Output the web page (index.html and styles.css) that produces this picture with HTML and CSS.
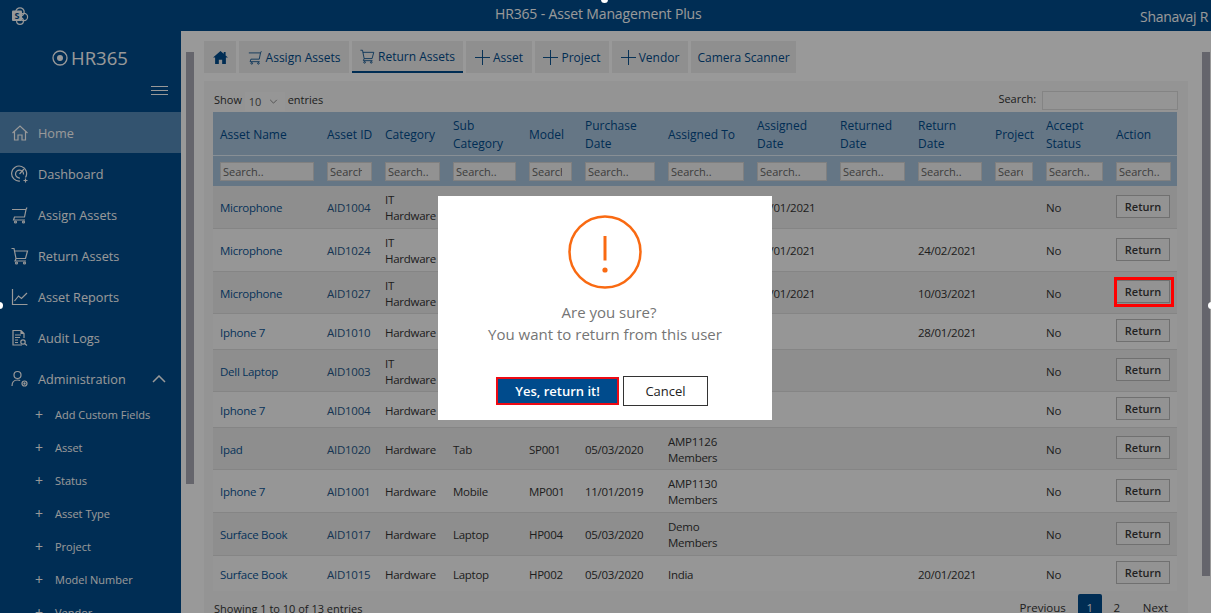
FILE: index.html
```html
<!DOCTYPE html>
<html lang="en">
<head>
<meta charset="utf-8">
<title>HR365 - Asset Management Plus</title>
<link rel="stylesheet" href="styles.css">
</head>
<body>
<div class="app">
  <header class="topbar">
    <svg class="top-logo" viewBox="0 0 18 18" width="18" height="18"><circle cx="9" cy="5" r="4.2" class="s"/><circle cx="13" cy="10" r="3.6" class="s"/><circle cx="9" cy="14" r="3.4" class="s"/><rect x="1" y="3.5" width="10" height="10.5" rx="1" class="f"/><text x="3.4" y="12" class="top-s">S</text></svg>
    <div class="top-title">HR365 - Asset Management Plus</div>
    <div class="top-user">Shanavaj R</div>
  </header>
  <div class="shell">
    <aside class="sidebar">
      <div class="brand">
        <svg viewBox="0 0 16 16" width="16" height="16"><circle cx="8" cy="8" r="7" class="s"/><circle cx="8" cy="8" r="3" class="f"/></svg>
        <span>HR365</span>
      </div>
      <div class="burger"><i></i><i></i><i></i></div>
      <nav class="menu">
        <a class="item active"><svg viewBox="0 0 18 18"><path d="M1.5 9 9 2l7.500 7M3.500 7.500V16h3.500v-5h4v5h3.500V7.500"/></svg>Home</a>
        <a class="item"><svg viewBox="0 0 18 18"><path d="M14.500 12.500A7.500 7.500 0 1 0 9 16"/><path d="M12.500 9.500A4 4 0 1 0 9 13"/><path d="m8.500 9 4.500-5"/><path d="M14.500 13.500v4M12.500 15.500h4"/></svg>Dashboard</a>
        <a class="item"><svg viewBox="0 0 18 18"><path d="M1 3.500h14L13.500 11H3.500L2.500 14h11.500M16 1.500l-1 2"/><circle cx="4.500" cy="16" r="1"/><circle cx="12.500" cy="16" r="1"/></svg>Assign Assets</a>
        <a class="item"><svg viewBox="0 0 18 18"><path d="M.5 1.500h2.500l2 10h9.500L16.500 4H3.500M5 11.500 4 14h11"/><circle cx="5.500" cy="16" r="1"/><circle cx="13.500" cy="16" r="1"/></svg>Return Assets</a>
        <a class="item"><svg viewBox="0 0 18 18"><path d="M1.500 1v15.500h15"/><path d="m3.500 13 4-5 3 2.500L16 5"/></svg>Asset Reports</a>
        <a class="item"><svg viewBox="0 0 18 18"><path d="M11 16H2V1.500h8l3 3V9M10 1.500v3h3M4 6h6M4 8.500h5M4 11h3M4 13.500h3"/><circle cx="12" cy="13" r="2.200"/><path d="m13.500 14.500 2.500 2"/></svg>Audit Logs</a>
        <a class="item"><svg viewBox="0 0 18 18"><circle cx="6.500" cy="5" r="3.500"/><path d="M1 16c0-4 2.200-6 5.500-6 1 0 2 .2 2.700.6"/><circle cx="13.500" cy="13.500" r="2.500"/><circle cx="13.500" cy="13.500" r=".6"/></svg>Administration<svg class="chev" viewBox="0 0 14 8"><path d="m1 7 6-6 6 6"/></svg></a>
        <a class="sub"><span>+</span>Add Custom Fields</a>
        <a class="sub"><span>+</span>Asset</a>
        <a class="sub"><span>+</span>Status</a>
        <a class="sub"><span>+</span>Asset Type</a>
        <a class="sub"><span>+</span>Project</a>
        <a class="sub"><span>+</span>Model Number</a>
        <a class="sub"><span>+</span>Vendor</a>
      </nav>
    </aside>
    <main class="main">
      <div class="scroll scroll-left"></div>
      <div class="content">
        <div class="tabs">
          <a class="tab tab-home"><svg viewBox="0 0 16 14" width="15" height="13"><path d="M8 0 0 7h2.200v7h4V9.500h3.600V14h4V7H16L13.500 4.800V1h-2v2z"/></svg></a>
          <a class="tab tab-w1"><svg class="tab-ic" viewBox="0 0 18 18"><path d="M1 3.500h14L13.500 11H3.500L2.500 14h11.500M16 1.500l-1 2"/><circle cx="4.500" cy="16" r="1"/><circle cx="12.500" cy="16" r="1"/></svg>Assign Assets</a>
          <a class="tab tab-w2 on"><svg class="tab-ic" viewBox="0 0 18 18"><path d="M.5 1.500h2.500l2 10h9.500L16.500 4H3.500M5 11.500 4 14h11"/><circle cx="5.500" cy="16" r="1"/><circle cx="13.500" cy="16" r="1"/></svg>Return Assets</a>
          <a class="tab tab-w3"><svg class="tab-ic" viewBox="0 0 16 16"><path d="M8 0v16M0 8h16"/></svg>Asset</a>
          <a class="tab tab-w4"><svg class="tab-ic" viewBox="0 0 16 16"><path d="M8 0v16M0 8h16"/></svg>Project</a>
          <a class="tab tab-w5"><svg class="tab-ic" viewBox="0 0 16 16"><path d="M8 0v16M0 8h16"/></svg>Vendor</a>
          <a class="tab tab-w6">Camera Scanner</a>
        </div>
        <section class="panel">
          <div class="toolbar">
            <div class="length">Show <span class="select">10 <svg viewBox="0 0 10 6" width="9" height="5"><path d="m1 1 4 4 4-4"/></svg></span> entries</div>
            <div class="search">Search: <input class="search-box" type="text"></div>
          </div>
          <table class="grid">
            <colgroup>
              <col class="c1"><col class="c2"><col class="c3"><col class="c4"><col class="c5"><col class="c6"><col class="c7"><col class="c8"><col class="c9"><col class="c10"><col class="c11"><col class="c12"><col class="c13">
            </colgroup>
            <thead>
              <tr class="head">
                <th>Asset Name</th><th>Asset ID</th><th>Category</th><th>Sub<br>Category</th><th>Model</th><th>Purchase<br>Date</th><th>Assigned To</th><th>Assigned<br>Date</th><th>Returned<br>Date</th><th>Return<br>Date</th><th>Project</th><th>Accept<br>Status</th><th>Action</th>
              </tr>
              <tr class="filter">
                <td><input placeholder="Search.."></td><td><input placeholder="Search.."></td><td><input placeholder="Search.."></td><td><input placeholder="Search.."></td><td><input placeholder="Search.."></td><td><input placeholder="Search.."></td><td><input placeholder="Search.."></td><td><input placeholder="Search.."></td><td><input placeholder="Search.."></td><td><input placeholder="Search.."></td><td><input placeholder="Search.."></td><td><input placeholder="Search.."></td><td><input placeholder="Search.."></td>
              </tr>
            </thead>
            <tbody>
              <tr class="tall"><td class="link">Microphone</td><td class="id">AID1004</td><td>IT<br>Hardware</td><td></td><td></td><td></td><td></td><td>20/01/2021</td><td></td><td></td><td></td><td>No</td><td><button>Return</button></td></tr>
              <tr class="tall"><td class="link">Microphone</td><td class="id">AID1024</td><td>IT<br>Hardware</td><td></td><td></td><td></td><td></td><td>20/01/2021</td><td></td><td>24/02/2021</td><td></td><td>No</td><td><button>Return</button></td></tr>
              <tr class="snug"><td class="link">Microphone</td><td class="id">AID1027</td><td>IT<br>Hardware</td><td></td><td></td><td></td><td></td><td>20/01/2021</td><td></td><td>10/03/2021</td><td></td><td>No</td><td><button>Return</button></td></tr>
              <tr class="short"><td class="link">Iphone 7</td><td class="id">AID1010</td><td>Hardware</td><td></td><td></td><td></td><td></td><td></td><td></td><td>28/01/2021</td><td></td><td>No</td><td><button>Return</button></td></tr>
              <tr class="snug"><td class="link">Dell Laptop</td><td class="id">AID1003</td><td>IT<br>Hardware</td><td></td><td></td><td></td><td></td><td></td><td></td><td></td><td></td><td>No</td><td><button>Return</button></td></tr>
              <tr class="short"><td class="link">Iphone 7</td><td class="id">AID1004</td><td>Hardware</td><td></td><td></td><td></td><td></td><td></td><td></td><td></td><td></td><td>No</td><td><button>Return</button></td></tr>
              <tr class="snug"><td class="link">Ipad</td><td class="id">AID1020</td><td>Hardware</td><td>Tab</td><td>SP001</td><td>05/03/2020</td><td>AMP1126<br>Members</td><td></td><td></td><td></td><td></td><td>No</td><td><button>Return</button></td></tr>
              <tr class="tall"><td class="link">Iphone 7</td><td class="id">AID1001</td><td>Hardware</td><td>Mobile</td><td>MP001</td><td>11/01/2019</td><td>AMP1130<br>Members</td><td></td><td></td><td></td><td></td><td>No</td><td><button>Return</button></td></tr>
              <tr class="tall"><td class="link">Surface Book</td><td class="id">AID1017</td><td>Hardware</td><td>Laptop</td><td>HP004</td><td>05/03/2020</td><td>Demo<br>Members</td><td></td><td></td><td></td><td></td><td>No</td><td><button>Return</button></td></tr>
              <tr class="last"><td class="link">Surface Book</td><td class="id">AID1015</td><td>Hardware</td><td>Laptop</td><td>HP002</td><td>05/03/2020</td><td>India</td><td></td><td></td><td>20/01/2021</td><td></td><td>No</td><td><button>Return</button></td></tr>
            </tbody>
          </table>
          <div class="foot">
            <div>Showing 1 to 10 of 13 entries</div>
            <div class="pager"><a>Previous</a><a class="page cur">1</a><a class="page">2</a><a>Next</a></div>
          </div>
        </section>
      </div>
      <div class="scroll scroll-right"></div>
    </main>
  </div>
</div>

<div class="overlay">
  <i class="dot dot-top"></i><i class="dot dot-left"></i><i class="dot dot-right"></i>
  <div class="marker"></div>
  <div class="dialog">
    <svg class="alert" viewBox="0 0 74 74" width="74" height="74"><circle cx="37" cy="37" r="35.500"/><path d="M37 21v24.500"/><circle class="alert-dot" cx="37" cy="55" r="2.600"/></svg>
    <p class="msg"><span class="msg-first">Are you sure?</span><br>You want to return from this user</p>
    <div class="actions">
      <button class="btn-yes">Yes, return it!</button>
      <button class="btn-no">Cancel</button>
    </div>
  </div>
</div>
</body>
</html>
```
FILE: styles.css
```css
* { box-sizing: border-box; }
html, body { margin: 0; height: 100%; overflow: hidden; }
body { font-family: "Open Sans", "Noto Sans", sans-serif; font-size: 12px; color: #333; background: #fff; }
.app { display: flex; flex-direction: column; height: 613px; }

.topbar { height: 31px; flex: none; background: #004b8c; color: #fff; display: flex; align-items: center; position: relative; padding: 0 0 0 11px; }
.top-logo { flex: none; }
.top-logo .s { fill: none; stroke: #fff; stroke-width: 1.2; }
.top-logo .f { fill: #fff; }
.top-s { font-size: 9px; font-weight: 700; fill: #004b8c; }
.top-title { position: absolute; left: 495px; top: 4px; font-size: 14px; line-height: 20px; letter-spacing: -.15px; }
.top-user { margin-left: auto; font-size: 14px; letter-spacing: -.3px; padding-top: 1px; margin-right: 3px; }

.shell { flex: 1; display: flex; min-height: 0; }
.sidebar { width: 181px; flex: none; background: #004b8c; color: #fff; overflow: hidden; }
.brand { display: flex; align-items: center; gap: 3px; padding: 4px 0 0 52px; height: 50px; font-size: 18.500px; line-height: 26px; }
.brand svg { flex: none; }
.brand .s { fill: none; stroke: #fff; stroke-width: 1.300; }
.brand .f { fill: #fff; }
.burger { height: 31px; padding: 5px 13px 0 0; display: flex; flex-direction: column; align-items: flex-end; gap: 3px; }
.burger i { display: block; width: 17px; height: 1px; background: #fff; }
.menu { display: flex; flex-direction: column; }
.item { height: 41px; flex: none; display: flex; align-items: center; font-size: 12.700px; padding: 0 0 0 11px; gap: 9px; }
.item svg { width: 18px; height: 18px; fill: none; stroke: #fff; stroke-width: 1.200; flex: none; }
.item.active { background: #558ab9; }
.item svg.chev { width: 14px; height: 8px; margin-left: 17px; stroke-width: 1.500; }
.sub { height: 33px; flex: none; display: flex; align-items: center; font-size: 11px; padding: 0 0 3px 35px; }
.sub span { width: 20px; font-size: 14px; }

.main { flex: 1; display: flex; min-width: 0; background: #fff; align-items: flex-start; }
.scroll { width: 8px; flex: none; background: #a9a9b4; margin-top: 21px; }
.scroll-left { height: 432px; margin-left: 5px; }
.scroll-right { height: 524px; margin-left: 14px; }
.content { width: 984px; flex: none; margin-left: 10px; padding-top: 10px; }

.tabs { display: flex; gap: 3px; height: 32px; }
.tab { background: #eee; display: flex; align-items: center; justify-content: center; gap: 3px; height: 32px; color: #004b8c; white-space: nowrap; }
.tab-home { width: 32px; }
.tab-home svg { fill: #004b8c; }
.tab-w1 { width: 110px; }
.tab-w2 { width: 111px; }
.tab-w3 { width: 66px; }
.tab-w4 { width: 74px; }
.tab-w5 { width: 76px; }
.tab-w6 { width: 105px; }
.tab.on { border-bottom: 2px solid #004b8c; }
.tab-ic { width: 15px; height: 15px; fill: none; stroke: #004b8c; stroke-width: 1; flex: none; }

.panel { margin-top: 8px; background: #f7f7f7; padding: 0 9px; height: 540px; }
.toolbar { display: flex; justify-content: space-between; height: 31px; align-items: center; padding: 10px 0 0 1px; font-size: 11px; }
.select { display: inline-flex; align-items: center; gap: 8px; width: 40px; height: 19px; padding-left: 4px; background: #fbfbfb; color: #555; vertical-align: middle; }
.select svg { fill: none; stroke: #555; stroke-width: .8; }
.search-box { width: 136px; height: 19px; margin-left: 3px; margin-right: 1px; border: 1px solid #ddd; background: #f9f9f9; padding: 0; vertical-align: middle; }
.search { margin-top: -3px; }

.grid { width: 964px; border-collapse: separate; border-spacing: 0; table-layout: fixed; }
.c1 { width: 107px; } .c2 { width: 58px; } .c3 { width: 68px; } .c4 { width: 76px; } .c5 { width: 56px; }
.c6 { width: 83px; } .c7 { width: 89px; } .c8 { width: 83px; } .c9 { width: 78px; } .c10 { width: 77px; }
.c11 { width: 51px; } .c12 { width: 70px; } .c13 { width: 68px; }
.grid th { background: #a9c5de; color: #004b8c; font-weight: 400; text-align: left; height: 44px; padding: 2px 7px 0; line-height: 17.500px; white-space: nowrap; border-bottom: 1px solid #e3eef8; }
.filter td { background: #a9c5de; height: 30px; padding: 1px 6px 0 7px; }
.filter input { display: block; width: 100%; height: 19px; border: 1px solid #d5d5d5; background: #f4f4f4; padding: 0 9px 0 2px; font: 11px "Open Sans", sans-serif; color: #777; }
.filter input::placeholder { color: #666; opacity: 1; }
.grid tbody td { padding: 2px 7px 0; line-height: 16px; font-size: 11.500px; letter-spacing: -.27px; border-bottom: 1px solid #dedede; white-space: nowrap; overflow: hidden; }
.grid tbody tr:nth-child(odd) td { background: #ededed; }
.grid tbody tr:nth-child(even) td { background: #fafafa; }
.tall td { height: 43px; }
.snug td { height: 42px; }
.short td { height: 36px; }
.last td { height: 35px; }
.grid tbody .last td { border-bottom: 0; }
.link { color: #0a5596; }
.id { color: #25598a; }
.grid button { display: block; width: 54px; height: 23px; margin-top: -4px; border: 1px solid #bbb; background: #f6f6f6; color: #3a3a3a; font: 600 11px "Open Sans", sans-serif; letter-spacing: 0; padding: 0; }

.foot { display: flex; justify-content: space-between; padding: 3px 11px 0 1px; height: 30px; font-size: 11px; }
.foot > div:first-child { padding-top: 7px; }
.pager { display: flex; gap: 0; font-size: 11.500px; }
.pager a { display: block; padding-top: 6px; }
.page { width: 24px; text-align: center; height: 24px; margin-left: 12px; }
.page + .page { margin-left: 3px; margin-right: 14px; }
.cur { background: #004b8c; color: #fff; border-radius: 2px 2px 0 0; }

.overlay { position: fixed; inset: 0; background: rgba(0, 0, 0, .4); z-index: 10; }
.dot { position: absolute; background: #fff; border-radius: 50%; width: 7px; height: 7px; }
.dot-top { left: 601px; top: -4px; }
.dot-left { left: -4px; top: 302px; }
.dot-right { left: 1208px; top: 302px; }
.marker { position: absolute; left: 1114px; top: 277px; width: 60px; height: 30px; border: 3px solid #f00; }
.dialog { position: absolute; left: 438px; top: 196px; width: 334px; height: 224px; background: #fff; display: flex; flex-direction: column; align-items: center; padding-top: 19px; }
.alert { flex: none; fill: none; stroke: #f96a12; stroke-width: 2.500; }
.alert-dot { fill: #f96a12; stroke: none; }
.alert path { stroke-width: 3; }
.msg { margin: 12px 0 0; text-align: center; font-size: 15px; line-height: 22px; color: #757575; }
.msg-first { padding-left: 8px; }
.actions { display: flex; gap: 4px; align-items: center; margin-top: 31px; margin-right: 6px; }
.btn-yes { width: 123px; height: 28px; background: #004b8c; border: 2px solid #ee0a14; color: #fff; font: 600 13px "Open Sans", sans-serif; padding: 0; }
.btn-no { width: 85px; height: 30px; background: #fff; border: 1px solid #333; color: #222; font: 400 13px "Open Sans", sans-serif; padding: 0; }
```
